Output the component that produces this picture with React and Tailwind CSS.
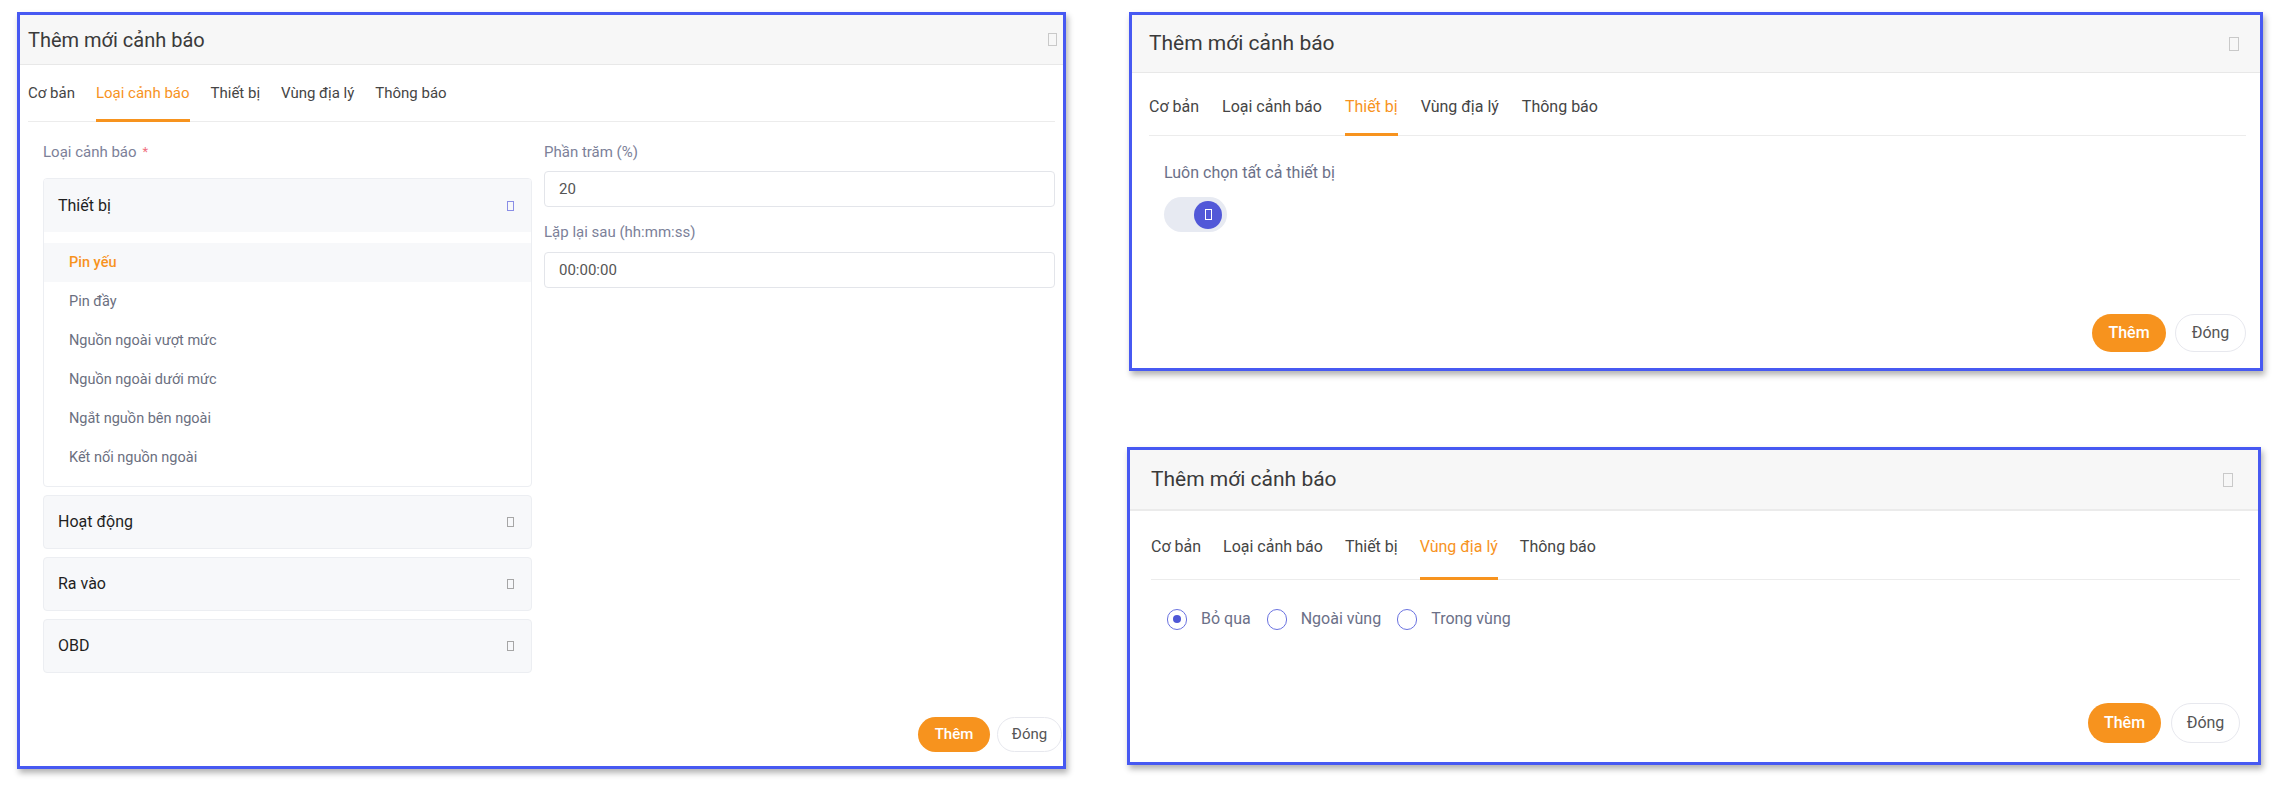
import React from "react";

function Tofu({ className }) {
  return <span className={"inline-block border " + className} />;
}

function Tabs1({ active }) {
  const tabs = ["Cơ bản", "Loại cảnh báo", "Thiết bị", "Vùng địa lý", "Thông báo"];
  return (
    <div className="mx-[8px] flex gap-[21px] pt-[17px] border-b border-[#ececec]">
      {tabs.map((t) => (
        <div
          key={t}
          className={
            "pb-[15px] -mb-px border-b-[3px] text-[15px] leading-[22px] whitespace-nowrap " +
            (t === active ? "border-[#f7931e] text-[#f7931e]" : "border-transparent text-[#454545]")
          }
        >
          {t}
        </div>
      ))}
    </div>
  );
}

function Tabs2({ active, variant }) {
  const tabs = ["Cơ bản", "Loại cảnh báo", "Thiết bị", "Vùng địa lý", "Thông báo"];
  const wrap =
    variant === 2
      ? "ml-[17px] mr-[14px] flex gap-[23px] pt-[22px] border-b border-[#ececec]"
      : "ml-[21px] mr-[18px] flex gap-[22px] pt-[24px] border-b border-[#ececec]";
  const pad = variant === 2 ? "pb-[15px]" : "pb-[19px]";
  return (
    <div className={wrap}>
      {tabs.map((t) => (
        <div
          key={t}
          className={
            pad +
            " -mb-px border-b-[3px] text-[16px] leading-[23px] whitespace-nowrap " +
            (t === active ? "border-[#f7931e] text-[#f7931e]" : "border-transparent text-[#454545]")
          }
        >
          {t}
        </div>
      ))}
    </div>
  );
}

function AccHeader({ title, blue }) {
  return (
    <div className="h-[54px] bg-[#f7f8fa] border border-[#eceef2] rounded-[4px] flex items-center justify-between pl-[14px] pr-[17px]">
      <span className="text-[16px] text-[#1f1f1f]">{title}</span>
      <Tofu className={"w-[7px] h-[10px] " + (blue ? "border-[#8a8ee6]" : "border-[#a6a6a6]")} />
    </div>
  );
}

function Panel1() {
  const items = [
    "Pin yếu",
    "Pin đầy",
    "Nguồn ngoài vượt mức",
    "Nguồn ngoài dưới mức",
    "Ngắt nguồn bên ngoài",
    "Kết nối nguồn ngoài",
  ];
  return (
    <div className="mt-[12px] ml-[17px] w-[1049px] h-[757px] border-[3px] border-[#4759f2] bg-white shadow-[2px_4px_6px_rgba(0,0,0,0.3)] flex flex-col">
      <div className="h-[50px] shrink-0 bg-[#f7f7f7] border-b border-[#e8e8e8] flex items-center justify-between pl-[8px] pr-[6px]">
        <span className="text-[20px] text-[#3a3a3a]">Thêm mới cảnh báo</span>
        <Tofu className="w-[9px] h-[13px] border-[#c9c9c9]" />
      </div>
      <Tabs1 active="Loại cảnh báo" />
      <div className="flex gap-[12px] pt-[19px] pl-[23px] pr-[8px]">
        <div className="w-[489px] flex flex-col">
          <div className="text-[15px] leading-[22px] text-[#7c8199]">
            Loại cảnh báo<span className="ml-[6px] text-[13px] align-top text-[#f07080]">*</span>
          </div>
          <div className="mt-[15px] border border-[#eceef2] rounded-[4px] overflow-hidden">
            <div className="h-[53px] bg-[#f7f8fa] flex items-center justify-between pl-[14px] pr-[17px]">
              <span className="text-[16px] text-[#1f1f1f]">Thiết bị</span>
              <Tofu className="w-[7px] h-[10px] border-[#8a8ee6]" />
            </div>
            <div className="pt-[11px] pb-[9px]">
              {items.map((it, i) => (
                <div
                  key={it}
                  className={
                    "h-[39px] flex items-center pl-[25px] text-[14.5px] " +
                    (i === 0 ? "bg-[#f7f8fa] text-[#f7931e] font-medium" : "text-[#6b6f80]")
                  }
                >
                  {it}
                </div>
              ))}
            </div>
          </div>
          <div className="mt-[8px]">
            <AccHeader title="Hoạt động" />
          </div>
          <div className="mt-[8px]">
            <AccHeader title="Ra vào" />
          </div>
          <div className="mt-[8px]">
            <AccHeader title="OBD" />
          </div>
        </div>
        <div className="flex-1 flex flex-col">
          <div className="text-[15px] leading-[22px] text-[#7c8199]">Phần trăm (%)</div>
          <div className="mt-[8px] h-[36px] border border-[#e3e5ea] rounded-[4px] flex items-center pl-[14px] text-[15px] text-[#555]">
            20
          </div>
          <div className="mt-[14px] text-[15px] leading-[22px] text-[#7c8199]">Lặp lại sau (hh:mm:ss)</div>
          <div className="mt-[9px] h-[36px] border border-[#e3e5ea] rounded-[4px] flex items-center pl-[14px] text-[15px] text-[#555]">
            00:00:00
          </div>
        </div>
      </div>
      <div className="mt-auto flex justify-end gap-[7px] pr-[1px] pb-[14px]">
        <button className="w-[72px] h-[35px] rounded-full bg-[#f7931e] text-white text-[15px] font-medium">Thêm</button>
        <button className="w-[65px] h-[35px] rounded-full bg-white border border-[#e7e8ee] text-[#555] text-[15px]">Đóng</button>
      </div>
    </div>
  );
}

function Panel2() {
  return (
    <div className="mt-[12px] ml-[2px] w-[1134px] h-[359px] border-[3px] border-[#4759f2] bg-white shadow-[2px_4px_6px_rgba(0,0,0,0.3)] flex flex-col">
      <div className="h-[58px] shrink-0 bg-[#f7f7f7] border-b border-[#e8e8e8] flex items-center justify-between pl-[17px] pr-[21px]">
        <span className="text-[21px] text-[#3a3a3a]">Thêm mới cảnh báo</span>
        <Tofu className="w-[10px] h-[14px] border-[#c9c9c9]" />
      </div>
      <Tabs2 active="Thiết bị" variant={2} />
      <div className="pl-[32px] pt-[25px]">
        <div className="text-[16px] leading-[23px] text-[#6b7088]">Luôn chọn tất cả thiết bị</div>
        <div className="mt-[13px] w-[63px] h-[35px] rounded-full bg-[#e7eaf2] flex items-center justify-end pr-[5px]">
          <div className="w-[28px] h-[28px] rounded-full bg-[#5158d8] flex items-center justify-center">
            <Tofu className="w-[7px] h-[11px] border-white" />
          </div>
        </div>
      </div>
      <div className="mt-auto flex justify-end gap-[9px] pr-[14px] pb-[16px]">
        <button className="w-[74px] h-[38px] rounded-full bg-[#f7931e] text-white text-[16px] font-medium">Thêm</button>
        <button className="w-[71px] h-[38px] rounded-full bg-white border border-[#e7e8ee] text-[#555] text-[16px]">Đóng</button>
      </div>
    </div>
  );
}

function Radio({ checked, label }) {
  return (
    <div className="flex items-center">
      <div className="w-[20px] h-[21px] rounded-full border-[1.5px] border-[#6a72e0] flex items-center justify-center">
        {checked && <div className="w-[8px] h-[8px] rounded-full bg-[#4e57d6]" />}
      </div>
      <span className="ml-[14px] text-[16px] text-[#6b7088]">{label}</span>
    </div>
  );
}

function Panel3() {
  return (
    <div className="mt-[76px] w-[1134px] h-[318px] border-[3px] border-[#4759f2] bg-white shadow-[2px_4px_6px_rgba(0,0,0,0.3)] flex flex-col">
      <div className="h-[61px] shrink-0 bg-[#f7f7f7] border-b-[2px] border-[#ebebeb] flex items-center justify-between pl-[21px] pr-[25px]">
        <span className="text-[21px] text-[#3a3a3a]">Thêm mới cảnh báo</span>
        <Tofu className="w-[10px] h-[14px] border-[#c9c9c9]" />
      </div>
      <Tabs2 active="Vùng địa lý" variant={3} />
      <div className="pl-[37px] pt-[27px] flex gap-[16px]">
        <Radio checked label="Bỏ qua" />
        <Radio label="Ngoài vùng" />
        <Radio label="Trong vùng" />
      </div>
      <div className="mt-auto flex justify-end gap-[10px] pr-[18px] pb-[19px]">
        <button className="w-[73px] h-[40px] rounded-full bg-[#f7931e] text-white text-[16px] font-medium">Thêm</button>
        <button className="w-[69px] h-[40px] rounded-full bg-white border border-[#e7e8ee] text-[#555] text-[16px]">Đóng</button>
      </div>
    </div>
  );
}

export default function App() {
  return (
    <div className="w-[2275px] h-[790px] bg-white flex font-[Roboto,sans-serif]">
      <Panel1 />
      <div className="ml-[61px] flex flex-col">
        <Panel2 />
        <Panel3 />
      </div>
    </div>
  );
}
